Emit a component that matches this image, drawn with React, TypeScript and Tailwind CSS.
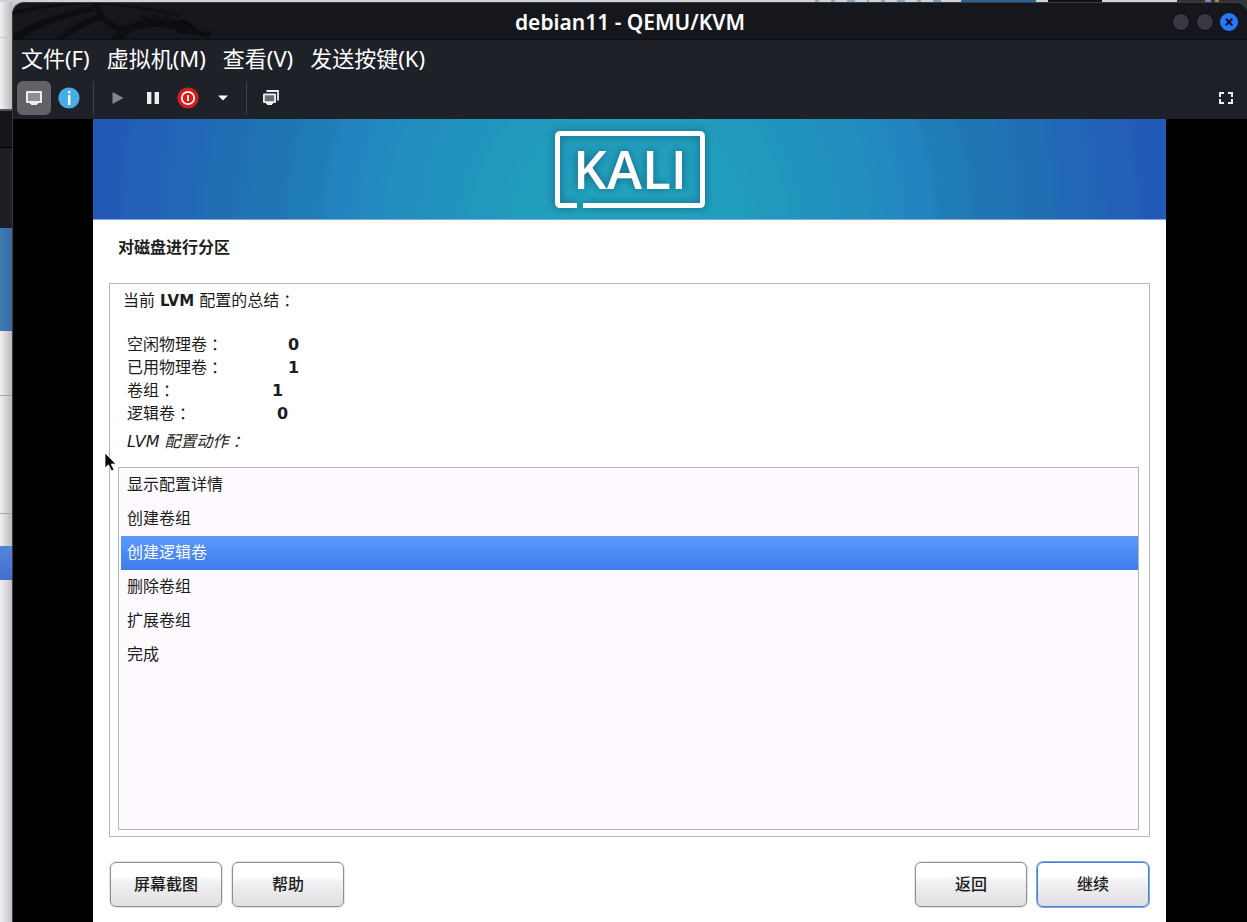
import React, { useState } from 'react';

interface Stat {
  label: string;
  value: number;
  labelWidth: string;
}

const menus = ['文件(F)', '虚拟机(M)', '查看(V)', '发送按键(K)'];

const stats: Stat[] = [
  { label: '空闲物理卷', value: 0, labelWidth: 'w-[161px]' },
  { label: '已用物理卷', value: 1, labelWidth: 'w-[161px]' },
  { label: '卷组', value: 1, labelWidth: 'w-[145px]' },
  { label: '逻辑卷', value: 0, labelWidth: 'w-[150px]' }
];

const actions = ['显示配置详情', '创建卷组', '创建逻辑卷', '删除卷组', '扩展卷组', '完成'];

// The SC face hangs the colon on the left, so pad it to the middle of its cell
function Colon() {
  return <span className="pl-1">：</span>;
}

function Dragon() {
  return (
    <svg className="h-[37px] w-[210px]" viewBox="9 9 630 111" fill="#0d0e12" aria-hidden="true">
      <path d="M9 34 C60 20 130 12 190 10 L236 10 C160 18 80 26 9 44 Z" />
      <path d="M9 104 C70 64 150 34 240 20 L252 34 C170 48 90 82 30 118 L9 118 Z" />
      <path d="M130 120 C170 88 210 62 262 44 L274 60 C226 76 190 98 160 120 Z" />
      <path d="M244 9 L262 9 C276 42 300 70 334 78 C362 74 384 62 408 58 C398 52 392 46 396 38 C404 50 420 56 440 56 C430 50 428 46 430 40 C440 52 456 58 474 58 C464 52 462 48 464 44 C476 56 490 60 506 62 C512 56 520 56 530 62 L556 84 C566 92 582 98 606 94 L596 116 C584 110 570 106 556 104 C530 104 506 104 494 88 C440 74 390 82 362 96 C350 102 342 110 338 120 L300 120 C306 110 314 102 318 94 C286 80 262 46 244 9 Z" />
      <path d="M262 9 C340 12 440 24 514 48 L504 50 C430 30 350 18 262 14 Z" />
      <path d="M516 58 L556 82 L550 86 L528 72 Z" fill="#08090c" />
    </svg>
  );
}

function BackgroundWindow() {
  return (
    <div className="flex w-3 shrink-0 flex-col bg-linear-to-r from-[#f1f1f2] to-[#b9b9bb]" aria-hidden="true">
      <div className="h-9 border-b border-[#c4c4c6]" />
      <div className="h-[73px] border-b-2 border-[#55565a]" />
      <div className="h-[37px] border-b border-black bg-[#15161a]" />
      <div className="h-20 bg-[#1d1f25]" />
      <div className="h-[103px] bg-linear-to-r from-[#3e7bb5] to-[#366b9e]" />
      <div className="h-[65px] border-b border-[#a3a3a3]" />
      <div className="h-[118px] border-b border-[#a3a3a3]" />
      <div className="h-8" />
      <div className="h-[34px] bg-linear-to-b from-[#5584dc] to-[#4470cc]" />
      <div className="flex-1 bg-linear-to-r from-[#f0eef3] to-[#c4c2c7]" />
    </div>
  );
}

function BackgroundPanel() {
  return (
    <div className="flex h-0.5 bg-[#d0d3d6]" aria-hidden="true">
      <div className="flex flex-1 justify-end gap-3 pr-5">
        <span className="w-1 bg-[#8ba6c6]" />
        <span className="w-1 bg-[#8ba6c6]" />
        <span className="w-2 bg-[#8ba6c6]" />
        <span className="w-0.5 bg-[#8ba6c6]" />
        <span className="w-1 bg-[#8ba6c6]" />
        <span className="w-2 bg-[#8ba6c6]" />
        <span className="w-1 bg-[#8ba6c6]" />
        <span className="w-2 bg-[#7d9cc2]" />
      </div>
      <div className="w-[75px] bg-[#2b6395]" />
      <div className="w-3" />
      <div className="w-[54px] bg-[#111214]" />
      <div className="w-[75px]" />
      <div className="flex w-[70px] justify-center gap-1 bg-[#333436]">
        <span className="w-1.5 bg-[#8d78c4]" />
        <span className="w-1 bg-[#a88a35]" />
      </div>
    </div>
  );
}

function TitleBar() {
  return (
    <header className="grid h-[37px] grid-cols-[1fr_auto_1fr] items-center border-b border-[#0d0e11] bg-[#16171c]">
      <Dragon />
      <h1 className="text-[21px] leading-8 font-semibold text-white">debian11 - QEMU/KVM</h1>
      <div className="flex justify-end gap-1.5 pr-[9px]">
        <button aria-label="最小化" className="size-[18px] rounded-full border border-[#0c0d10] bg-[#373842]" />
        <button aria-label="最大化" className="size-[18px] rounded-full border border-[#0c0d10] bg-[#373842]" />
        <button aria-label="关闭" className="flex size-[18px] items-center justify-center rounded-full bg-[#2777ff]">
          <svg className="size-2" viewBox="0 0 8 8" stroke="#0c1526" strokeWidth="2.2">
            <path d="M0.8 0.8 L7.2 7.2 M7.2 0.8 L0.8 7.2" />
          </svg>
        </button>
      </div>
    </header>
  );
}

function ToolButton({ label, className = '', children }: { label: string; className?: string; children: React.ReactNode }) {
  return (
    <button aria-label={label} className={`flex size-[34px] items-center justify-center rounded-md ${className}`}>
      {children}
    </button>
  );
}

function Toolbar() {
  return (
    <div className="flex h-[41px] items-start gap-px px-1 pt-[3px]">
      <ToolButton label="控制台" className="bg-[#626267]">
        <svg width="16" height="16" viewBox="0 0 16 16">
          <rect x="0" y="1" width="16" height="12" rx="1" fill="#eeeeec" />
          <rect x="2" y="3" width="12" height="8" fill="#8f8f93" />
          <path d="M4 12 h8 v2 h-1 v1 h-6 v-1 h-1 Z" fill="#eeeeec" />
        </svg>
      </ToolButton>
      <ToolButton label="详情">
        <svg width="22" height="22" viewBox="0 0 22 22">
          <circle cx="11" cy="11" r="10.6" fill="#45aee8" />
          <rect x="10" y="8" width="2.4" height="10" fill="#fff" />
          <rect x="10" y="4" width="2.4" height="2.4" fill="#fff" />
        </svg>
      </ToolButton>
      <div className="mx-1.5 h-[34px] w-px bg-[#3d3f45]" />
      <ToolButton label="运行">
        <svg width="12" height="12" viewBox="0 0 12 12" fill="#85868a">
          <path d="M0.5 0 L11.5 6 L0.5 12 Z" />
        </svg>
      </ToolButton>
      <ToolButton label="暂停">
        <svg width="12" height="12" viewBox="0 0 12 12" fill="#eeeeec">
          <path d="M0 0 h4.4 v12 h-4.4 Z M7.6 0 h4.4 v12 h-4.4 Z" />
        </svg>
      </ToolButton>
      <ToolButton label="关机">
        <svg width="22" height="22" viewBox="0 0 22 22">
          <circle cx="11" cy="11" r="10.6" fill="#d81b1b" />
          <circle cx="11" cy="11" r="6.2" fill="none" stroke="#fff" strokeWidth="1.7" />
          <rect x="10.1" y="8" width="1.8" height="6" fill="#fff" />
        </svg>
      </ToolButton>
      <ToolButton label="关机选项">
        <svg width="10" height="6" viewBox="0 0 10 6" fill="#fff">
          <path d="M0 0.5 H10 L5 5.5 Z" />
        </svg>
      </ToolButton>
      <div className="mr-1.5 ml-[5px] h-[34px] w-px bg-[#3d3f45]" />
      <ToolButton label="快照">
        <svg width="16" height="16" viewBox="0 0 16 16">
          <path d="M3.500 1 H15 V10.500" fill="none" stroke="#eeeeec" strokeWidth="1.8" />
          <rect x="0" y="3.500" width="13" height="9.500" rx="1" fill="#eeeeec" />
          <rect x="1.800" y="5.300" width="9.400" height="5.900" fill="#6a6b6f" />
          <path d="M3 12.500 h7 v1.500 h-1 v1 h-5 v-1 h-1 Z" fill="#eeeeec" />
        </svg>
      </ToolButton>
      <ToolButton label="全屏" className="ml-auto">
        <svg width="14" height="12" viewBox="0 0 14 12" fill="none" stroke="#eeeeec" strokeWidth="2">
          <path d="M1 5 V1 H5 M9 1 H13 V5 M13 7 V11 H9 M5 11 H1 V7" />
        </svg>
      </ToolButton>
    </div>
  );
}

function Banner() {
  return (
    <div className="flex h-[101px] justify-center border-b border-[#7fa9d8] bg-[radial-gradient(circle_at_50%_105%,#21a3bd_0_50px,#219dbd_80px_115px,#2198bd_135px_155px,#2194be_175px_195px,#228fbf_215px_235px,#228abf_255px_270px,#2383c1_280px_300px,#207cb5_312px_335px,#2075b5_350px_380px,#216eb5_395px_420px,#2167b6_438px_462px,#2260b7_478px_505px,#2258b6_515px)]">
      <svg className="mt-2 h-[88px] w-[160px] drop-shadow-[0_0_4px_#14607e]" viewBox="0 0 160 88" role="img" aria-label="KALI">
        <path
          d="M27 78.500 H10.500 Q7.500 78.500 7.500 75.500 V9.500 Q7.500 6.500 10.500 6.500 H149.500 Q152.500 6.500 152.500 9.500 V75.500 Q152.500 78.500 149.500 78.500 H33"
          fill="none"
          stroke="#fff"
          strokeWidth="5"
        />
        <text x="80" y="62" textAnchor="middle" fill="#fff" className="font-['Open_Sans',sans-serif] text-[53px] font-semibold">
          KALI
        </text>
      </svg>
    </div>
  );
}

function InstallerButton({ children, focused = false }: { children: React.ReactNode; focused?: boolean }) {
  return (
    <button
      className={`h-[45px] w-28 rounded-md border bg-linear-to-b from-white from-30% via-[#f1f0f2] via-45% to-[#e0dee0] font-medium ${
        focused ? 'border-[#4a7fd6] ring-1 ring-[#7ea6e6]' : 'border-[#8e8e8e] ring-1 ring-[#e6e6e6]'
      }`}
    >
      {children}
    </button>
  );
}

function Installer() {
  const [selected, setSelected] = useState(2);

  return (
    <main className="flex flex-1 flex-col bg-white text-base text-[#1c1c1c] font-['DejaVu_Sans','Noto_Sans_CJK_SC',sans-serif]">
      <Banner />
      <h2 className="mt-4 pl-[25px] leading-6 font-bold">对磁盘进行分区</h2>

      <section className="mx-4 mt-[23px] flex flex-1 flex-col border border-[#b5b5b5] pt-[5px] pr-2.5 pb-1.5 pl-2">
        <p className="h-6 pl-[5px] leading-6">
          当前 <strong className="text-[15px]">LVM</strong> 配置的总结<Colon />
        </p>
        <dl className="mt-5 pl-[9px]">
          {stats.map((stat) => (
            <div key={stat.label} className="flex h-[23px] items-center leading-[23px]">
              <dt className={stat.labelWidth}>{stat.label}<Colon /></dt>
              <dd className="font-bold">{stat.value}</dd>
            </div>
          ))}
        </dl>
        <p id="action-label" className="mt-[5px] h-6 pl-[9px] leading-6 italic">
          LVM 配置动作<Colon />
        </p>

        <ul role="listbox" aria-labelledby="action-label" className="mt-[13px] flex-1 border border-[#b5b5b5] bg-[#fefaff] pl-0.5">
          {actions.map((action, i) => (
            <li key={action} role="presentation">
              <button
                role="option"
                aria-selected={i === selected}
                onClick={() => setSelected(i)}
                className={`block h-[34px] w-full pl-1.5 text-left ${
                  i === selected ? 'bg-linear-to-b from-[#5c98fc] to-[#3c7ded] text-white' : ''
                }`}
              >
                {action}
              </button>
            </li>
          ))}
        </ul>
      </section>

      <div className="mx-[17px] mt-[25px] mb-[15px] flex gap-2.5">
        <InstallerButton>屏幕截图</InstallerButton>
        <InstallerButton>帮助</InstallerButton>
        <div className="flex-1" />
        <InstallerButton>返回</InstallerButton>
        <InstallerButton focused>继续</InstallerButton>
      </div>
    </main>
  );
}

function Pointer() {
  return (
    <svg className="absolute top-[452px] left-[104px] h-5 w-3.5" viewBox="0 0 14 20" aria-hidden="true">
      <path d="M1 1 V16 L4.500 12.800 L7.500 19 L10 17.800 L7.200 12 H12 Z" fill="#000" stroke="#fff" strokeWidth="0.8" />
    </svg>
  );
}

export default function App() {
  return (
    <div className="relative flex min-h-screen flex-col font-['Noto_Sans','Noto_Sans_CJK_SC',sans-serif]">
      <BackgroundPanel />
      <div className="flex flex-1 bg-linear-to-r from-[#c8cacc] from-50% to-[#333436] to-50%">
        <BackgroundWindow />
        <div className="flex min-w-0 flex-1 flex-col overflow-hidden rounded-t-xl border-t border-l border-[#3a3b40] bg-[#1f2128]">
          <TitleBar />
          <nav className="flex h-[38px] items-center gap-[17px] px-2 pb-0.5 text-[22px] text-white">
            {menus.map((menu) => (
              <button key={menu}>{menu}</button>
            ))}
          </nav>
          <Toolbar />
          <div className="flex flex-1 flex-col bg-black pr-[81px] pl-20">
            <Installer />
          </div>
        </div>
      </div>
      <Pointer />
    </div>
  );
}
